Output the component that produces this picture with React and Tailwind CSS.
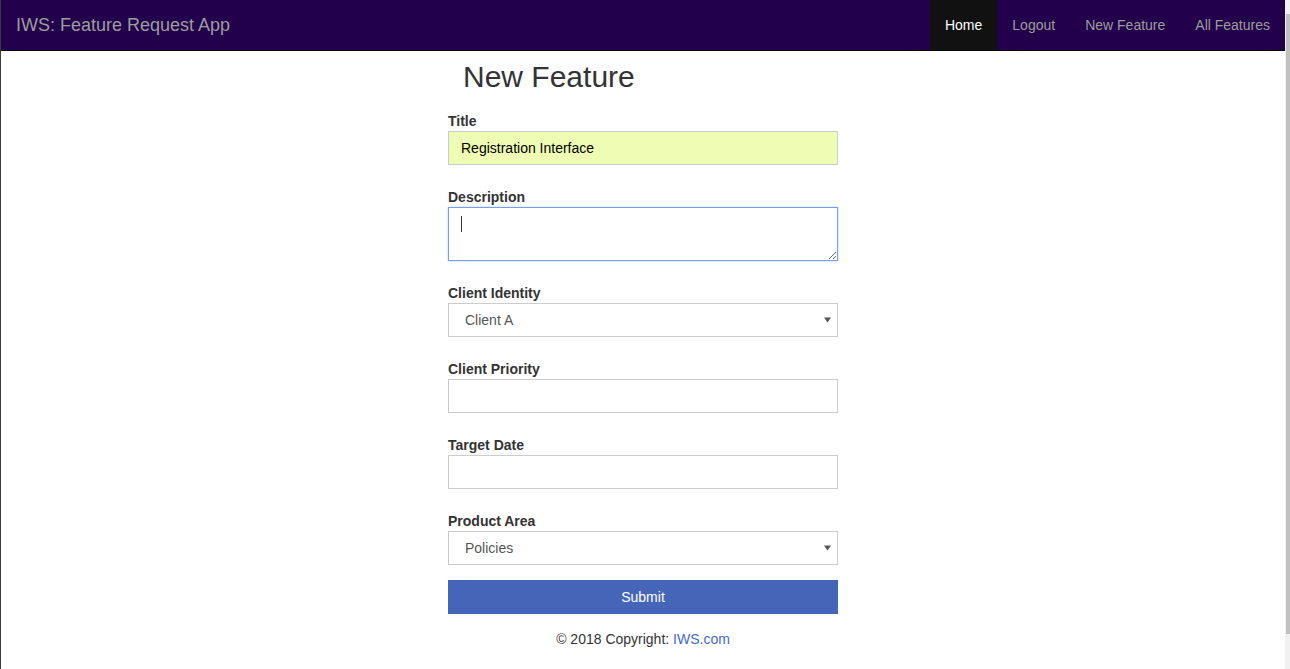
import React from "react";

function Label({ children }) {
  return <div className="text-[14px] leading-[20px] font-bold text-[#333]">{children}</div>;
}

function TextBox({ children, className = "" }) {
  return (
    <div className={`h-[34px] border border-[#ccc] flex items-center pl-[12px] text-[14px] ${className}`}>
      {children}
    </div>
  );
}

function SelectBox({ value }) {
  return (
    <div className="h-[34px] border border-[#ccc] bg-white flex items-center justify-between pl-[16px] pr-[5px] text-[14px] text-[#555]">
      <span>{value}</span>
      <svg width="7" height="6" viewBox="0 0 7 6" className="mr-[1px]">
        <path d="M0 0.5 L7 0.5 L3.5 5.5 Z" fill="#555" />
      </svg>
    </div>
  );
}

export default function App() {
  const font = { fontFamily: '"Liberation Sans", Arial, sans-serif' };
  return (
    <div className="flex w-[1290px] h-[669px] bg-white overflow-hidden" style={font}>
      <div className="w-[1px] bg-[#3a3a3a]" />
      <div className="flex-1 flex flex-col">
        <nav className="h-[51px] bg-[#22004b] border-b border-[#080808] flex items-stretch justify-between">
          <div className="pl-[15px] flex items-center text-[18px] text-[#9d9d9d] leading-[20px]">
            IWS: Feature Request App
          </div>
          <div className="flex items-stretch text-[14px] leading-[20px]">
            <div className="px-[15px] flex items-center bg-[#111] text-white">Home</div>
            <div className="px-[15px] flex items-center text-[#9d9d9d]">Logout</div>
            <div className="px-[15px] flex items-center text-[#9d9d9d]">New Feature</div>
            <div className="px-[15px] flex items-center text-[#9d9d9d]">All Features</div>
          </div>
        </nav>
        <div className="w-[390px] mx-auto flex flex-col">
          <h2 className="mt-[9px] mb-[18px] pl-[15px] text-[30px] leading-[33px] text-[#333] font-normal">New Feature</h2>
          <Label>Title</Label>
          <TextBox className="bg-[#effdb4] text-black">Registration Interface</TextBox>
          <div className="h-[22px]" />
          <Label>Description</Label>
          <div className="relative">
            <textarea
              className="block w-full h-[54px] border border-[#76a1e8] bg-white outline-none shadow-[0_0_2px_rgba(102,150,233,0.5)]"
              readOnly
            />
            <div className="absolute left-[13px] top-[9px] w-[1px] h-[16px] bg-[#333]" />
          </div>
          <div className="h-[22px]" />
          <Label>Client Identity</Label>
          <SelectBox value="Client A" />
          <div className="h-[22px]" />
          <Label>Client Priority</Label>
          <TextBox className="bg-white" />
          <div className="h-[22px]" />
          <Label>Target Date</Label>
          <TextBox className="bg-white" />
          <div className="h-[22px]" />
          <Label>Product Area</Label>
          <SelectBox value="Policies" />
          <div className="h-[15px]" />
          <div className="h-[34px] bg-[#4566b8] text-white text-[14px] flex items-center justify-center">Submit</div>
          <div className="mt-[15px] text-center text-[14px] leading-[20px] text-[#333]">
            © 2018 Copyright: <span className="text-[#4169c9]">IWS.com</span>
          </div>
        </div>
      </div>
      <div className="w-[5px] bg-[#f1f1f1] flex flex-col">
        <div className="h-[14px]" />
        <div className="h-[620px] bg-[#c1c1c1] ml-[1px]" />
      </div>
    </div>
  );
}
